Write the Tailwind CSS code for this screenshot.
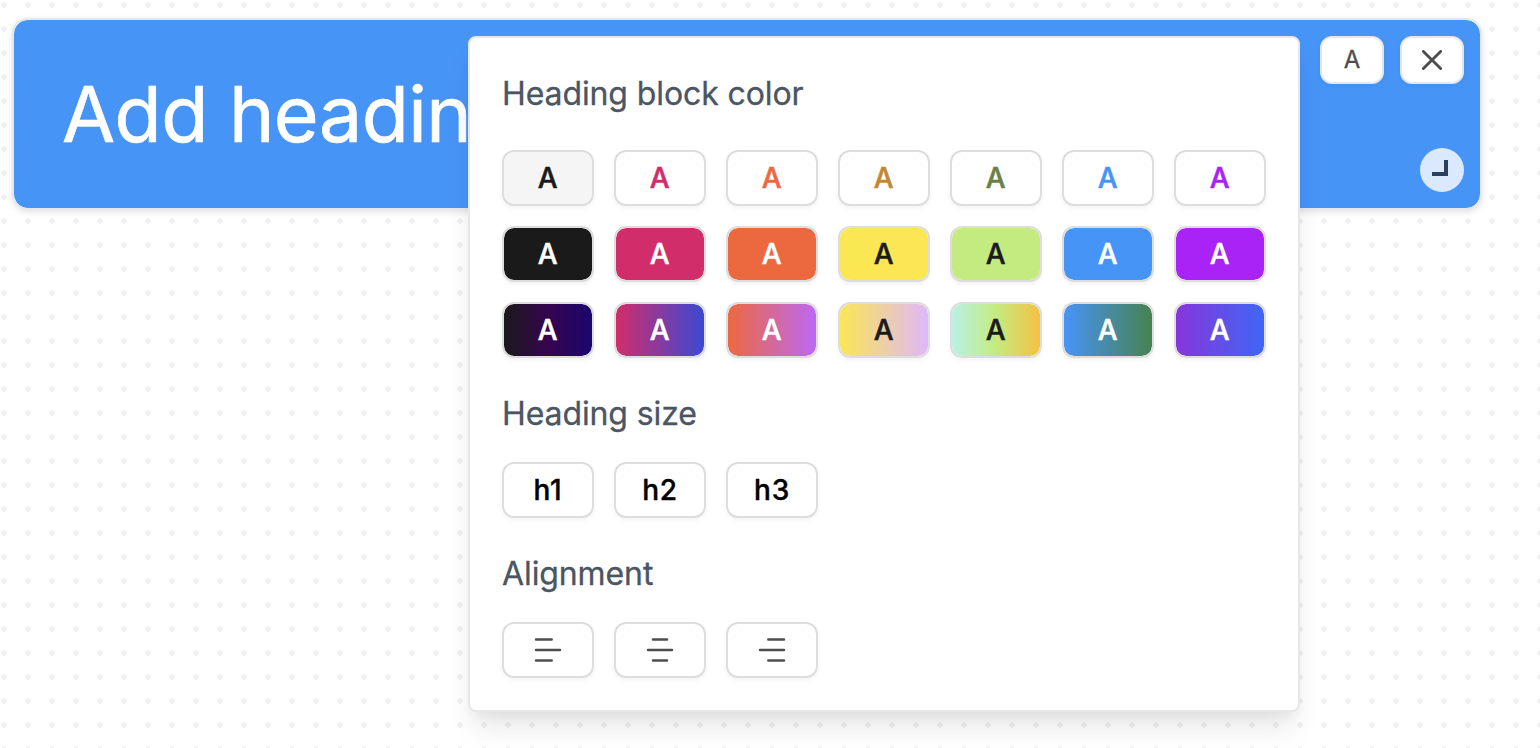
<!DOCTYPE html>
<html lang="en">
<head>
<meta charset="utf-8">
<title>Heading block</title>
<script src="https://cdn.jsdelivr.net/npm/@tailwindcss/browser@4"></script>
</head>
<body class="relative h-[748px] w-[1540px] overflow-hidden bg-white font-['Inter',sans-serif]">
<svg class="absolute inset-0" width="1540" height="748" aria-hidden="true">
  <defs><pattern id="dots" x="1" y="2" width="24" height="24" patternUnits="userSpaceOnUse"><path d="M2 0h2v1h1v1h1v2h-1v1h-1v1h-2v-1h-1v-1h-1v-2h1v-1h1z" fill="#f0f0f0"/></pattern></defs>
  <rect width="1540" height="748" fill="url(#dots)"/>
</svg>
<main class="relative px-3 pt-[18px]">
  <section class="flex h-[192px] w-[1470px] justify-between rounded-2xl border-2 border-[#e5e7eb] bg-[#4794f7] bg-clip-padding shadow-[0_2px_6px_rgba(0,0,0,0.12)]">
    <h1 class="pt-[38px] pl-12 text-[77px] leading-[112px] font-normal tracking-[-0.55px] text-white whitespace-nowrap [-webkit-text-stroke:0.7px_#fff]">Add heading</h1>
    <div class="flex flex-col items-end justify-between p-4 pt-4">
      <div class="flex gap-4">
        <button class="flex h-12 w-16 items-center justify-center rounded-xl border-2 border-[#e5e7eb] bg-white text-2xl text-[#4d4d4d] shadow-[0_2px_4px_rgba(0,0,0,0.05)] [-webkit-text-stroke:0.3px_#4d4d4d]">A</button>
        <button class="flex h-12 w-16 items-center justify-center rounded-xl border-2 border-[#e5e7eb] bg-white shadow-[0_2px_4px_rgba(0,0,0,0.05)]"><svg width="20" height="20" fill="none" stroke="#4d4d4d" stroke-width="2.8" stroke-linecap="round"><path d="M1.4 1.4l17.2 17.2M18.6 1.4L1.4 18.6"/></svg></button>
      </div>
      <div class="flex size-11 items-center justify-center rounded-full bg-[#dae9fd]"><svg width="44" height="44"><path d="M12 24h12v-12h4v16H12z" fill="#2a405c"/></svg></div>
    </div>
  </section>
</main>
<section class="absolute top-9 left-[468px] h-[676px] w-[832px] rounded-lg border-2 border-[#e5e7eb] bg-white px-8 pt-8 shadow-[0_20px_30px_-6px_rgba(0,0,0,0.1),0_8px_12px_-4px_rgba(0,0,0,0.05)]">
  <h2 class="h-12 text-[32px] leading-12 tracking-[-0.1px] text-[#4b5563] [-webkit-text-stroke:0.3px_#4b5563]">Heading block color</h2>
  <div id="colors" class="mt-8 grid grid-cols-[repeat(7,92px)] gap-5"></div>
  <h2 class="mt-8 h-12 text-[32px] leading-12 tracking-[-0.1px] text-[#4b5563] [-webkit-text-stroke:0.3px_#4b5563]">Heading size</h2>
  <div class="mt-6 flex gap-5 text-[28px] font-medium tracking-[0.7px] text-black [-webkit-text-stroke:0.4px_#000]">
    <button class="flex h-14 w-23 items-center justify-center rounded-xl border-2 border-[#dddddd] bg-white shadow-[0_2px_4px_rgba(0,0,0,0.05)]">h1</button>
    <button class="flex h-14 w-23 items-center justify-center rounded-xl border-2 border-[#dddddd] bg-white shadow-[0_2px_4px_rgba(0,0,0,0.05)]">h2</button>
    <button class="flex h-14 w-23 items-center justify-center rounded-xl border-2 border-[#dddddd] bg-white shadow-[0_2px_4px_rgba(0,0,0,0.05)]">h3</button>
  </div>
  <h2 class="mt-8 h-12 text-[32px] leading-12 tracking-[-0.1px] text-[#4b5563] [-webkit-text-stroke:0.3px_#4b5563]">Alignment</h2>
  <div class="mt-6 flex gap-5">
    <button class="flex h-14 w-23 items-center justify-center rounded-xl border-2 border-[#dddddd] bg-white shadow-[0_2px_4px_rgba(0,0,0,0.05)]"><svg width="28" height="28" fill="none" stroke="#4d4d4d" stroke-width="2.5" stroke-linecap="round"><path d="M2 3.5H17.7M2 14H26M2 24.5H17.7"/></svg></button>
    <button class="flex h-14 w-23 items-center justify-center rounded-xl border-2 border-[#dddddd] bg-white shadow-[0_2px_4px_rgba(0,0,0,0.05)]"><svg width="28" height="28" fill="none" stroke="#4d4d4d" stroke-width="2.5" stroke-linecap="round"><path d="M7 3.5H21M2 14H26M7 24.5H21"/></svg></button>
    <button class="flex h-14 w-23 items-center justify-center rounded-xl border-2 border-[#dddddd] bg-white shadow-[0_2px_4px_rgba(0,0,0,0.05)]"><svg width="28" height="28" fill="none" stroke="#4d4d4d" stroke-width="2.5" stroke-linecap="round"><path d="M10.3 3.5H26M2 14H26M10.3 24.5H26"/></svg></button>
  </div>
</section>
<script>
const swatches = [
  ['#f5f5f5','#1a1a1a'],['#fff','#d12d6a'],['#fff','#ec693f'],['#fff','#c08a30'],['#fff','#698047'],['#fff','#4794f7'],['#fff','#a922f6'],
  ['#1a1a1a','#fff'],['#d12d6a','#fff'],['#ec693f','#fff'],['#fbe654','#1a1a1a'],['#c4eb80','#1a1a1a'],['#4794f7','#fff'],['#a922f6','#fff'],
  ['linear-gradient(90deg,#1a1a1a,#36044f 50%,#1b066d)','#fff'],['linear-gradient(90deg,#d12d6a,#3b49d3)','#fff'],['linear-gradient(90deg,#ec693f,#bd68f5)','#fff'],['linear-gradient(90deg,#fbe654,#dfb8fb)','#1a1a1a'],['linear-gradient(90deg,#b9f1e5,#c4eb80 50%,#f4c144)','#1a1a1a'],['linear-gradient(90deg,#4794f7,#47824f)','#fff'],['linear-gradient(90deg,#8736da,#3f66f6)','#fff']
];
const grid = document.getElementById('colors');
for (const [bg, color] of swatches) {
  const b = document.createElement('button');
  b.className = 'flex h-14 w-23 items-center justify-center rounded-xl border-2 border-[#dddddd] text-[28px] font-medium tracking-[0.7px] shadow-[0_2px_4px_rgba(0,0,0,0.05)] [-webkit-text-stroke:0.5px_currentColor]';
  b.style.background = bg;
  b.style.backgroundClip = 'padding-box';
  b.style.color = color;
  b.textContent = 'A';
  grid.append(b);
}
</script>
</body>
</html>
